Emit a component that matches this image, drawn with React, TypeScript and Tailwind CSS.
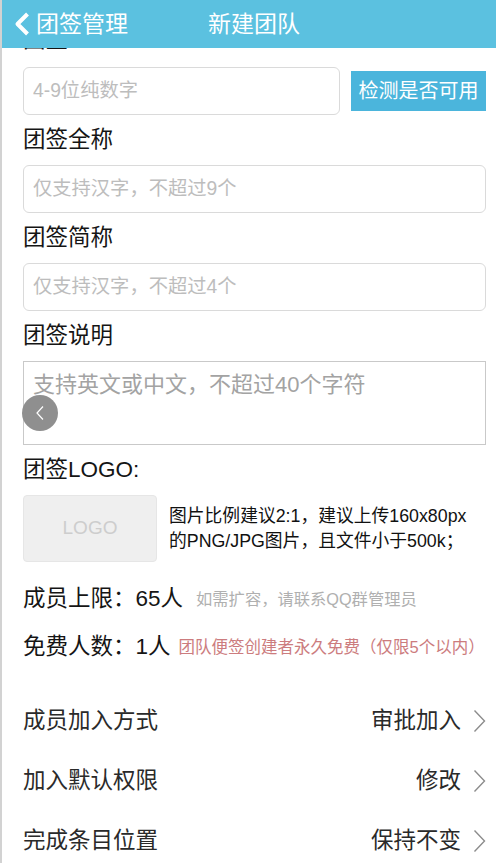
import React from "react";

const rows = [
  { label: "成员加入方式", value: "审批加入" },
  { label: "加入默认权限", value: "修改" },
  { label: "完成条目位置", value: "保持不变" },
];

function RightChevron() {
  return (
    <svg width="13" height="24" viewBox="0 0 13 24" fill="none">
      <path d="M1.5 1.5 L11.5 12 L1.5 22.5" stroke="#8c8c8c" strokeWidth="1.4" />
    </svg>
  );
}

function Label({ children }: { children: React.ReactNode }) {
  return (
    <div className="mt-[10px] h-[30px] text-[22.5px] leading-[30px] text-[#151515]">
      {children}
    </div>
  );
}

export default function App() {
  return (
    <div className="flex h-[863px] w-[496px] overflow-hidden bg-white font-[family-name:'Liberation_Sans','Noto_Sans_CJK_SC',sans-serif]">
      <div className="w-[2px] shrink-0 bg-[#d2d2d2]" />
      <div className="flex min-w-0 flex-1 flex-col">
        <header className="flex h-12 shrink-0 items-center bg-[#5bc1e0] text-white">
          <svg className="ml-[11px]" width="18" height="24" viewBox="0 0 18 24" fill="none">
            <path d="M14.5 2 L4.5 12 L14.5 22" stroke="white" strokeWidth="4" strokeLinejoin="round" />
          </svg>
          <span className="ml-[5px] text-[23px] leading-none">团签管理</span>
          <span className="ml-[80px] text-[23px] leading-none">新建团队</span>
        </header>

        <div className="relative flex flex-col pl-[21px] pr-[10px]">
          <div className="h-[5px] overflow-hidden">
            <div className="mt-[-23px] text-[22.5px] leading-[30px] text-[#151515]">团签ID</div>
          </div>

          <div className="mt-[14px] flex items-center gap-[11px]">
            <input
              className="h-12 w-[317px] rounded-[6px] border border-[#dadada] px-[9px] text-[19.3px] outline-none placeholder:text-[#bdbdbd]"
              placeholder="4-9位纯数字"
            />
            <button className="flex h-10 flex-1 items-center justify-center bg-[#4bb5dc] text-[20px] text-white">
              检测是否可用
            </button>
          </div>

          <Label>团签全称</Label>
          <input
            className="mt-[10px] h-12 w-full rounded-[6px] border border-[#dadada] px-[9px] text-[19.3px] outline-none placeholder:text-[#bdbdbd]"
            placeholder="仅支持汉字，不超过9个"
          />

          <Label>团签简称</Label>
          <input
            className="mt-[10px] h-12 w-full rounded-[6px] border border-[#dadada] px-[9px] text-[19.3px] outline-none placeholder:text-[#bdbdbd]"
            placeholder="仅支持汉字，不超过4个"
          />

          <Label>团签说明</Label>
          <textarea
            className="mt-[10px] h-[84px] w-full resize-none border border-[#c9c9c9] px-[9px] pt-[8px] text-[22px] leading-[30px] outline-none placeholder:text-[#a3a3a3]"
            placeholder="支持英文或中文，不超过40个字符"
          />

          <Label>团签LOGO:</Label>
          <div className="mt-[10px] flex items-center">
            <div className="flex h-[67px] w-[134px] shrink-0 items-center justify-center rounded-[4px] border border-[#e6e6e6] bg-[#efefef] text-[19px] text-[#cdcdcd]">
              LOGO
            </div>
            <div className="ml-[12px] whitespace-nowrap text-[17.8px] leading-[25px] text-[#111]">
              <div>图片比例建议2:1，建议上传160x80px</div>
              <div>的PNG/JPG图片，且文件小于500k；</div>
            </div>
          </div>

          <div className="mt-[13px] flex h-12 items-center whitespace-nowrap">
            <span className="text-[22.5px] text-[#151515]">成员上限：65人</span>
            <span className="ml-[13px] text-[16.3px] text-[#b0b0b0]">如需扩容，请联系QQ群管理员</span>
          </div>
          <div className="flex h-12 items-center whitespace-nowrap">
            <span className="shrink-0 text-[22.5px] text-[#151515]">免费人数：1人</span>
            <span className="ml-[8px] text-[16.5px] text-[#cc7c7e]">团队便签创建者永久免费（仅限5个以内）</span>
          </div>

          <div className="absolute left-[20px] top-[347px] flex h-9 w-9 items-center justify-center rounded-full bg-[#8f8f8f]">
            <svg width="10" height="16" viewBox="0 0 10 16" fill="none">
              <path d="M8 1.5 L2 8 L8 14.5" stroke="white" strokeWidth="1.2" />
            </svg>
          </div>
        </div>

        <div className="mt-[20px] h-px bg-[#efefef]" />

        {rows.map((r) => (
          <div key={r.label} className="flex h-[60px] shrink-0 items-center pl-[21px] pr-[10px]">
            <span className="text-[22.5px] text-[#2a2a2a]">{r.label}</span>
            <span className="ml-auto text-[22.5px] text-[#2a2a2a]">{r.value}</span>
            <span className="ml-[12px]">
              <RightChevron />
            </span>
          </div>
        ))}
      </div>
    </div>
  );
}
